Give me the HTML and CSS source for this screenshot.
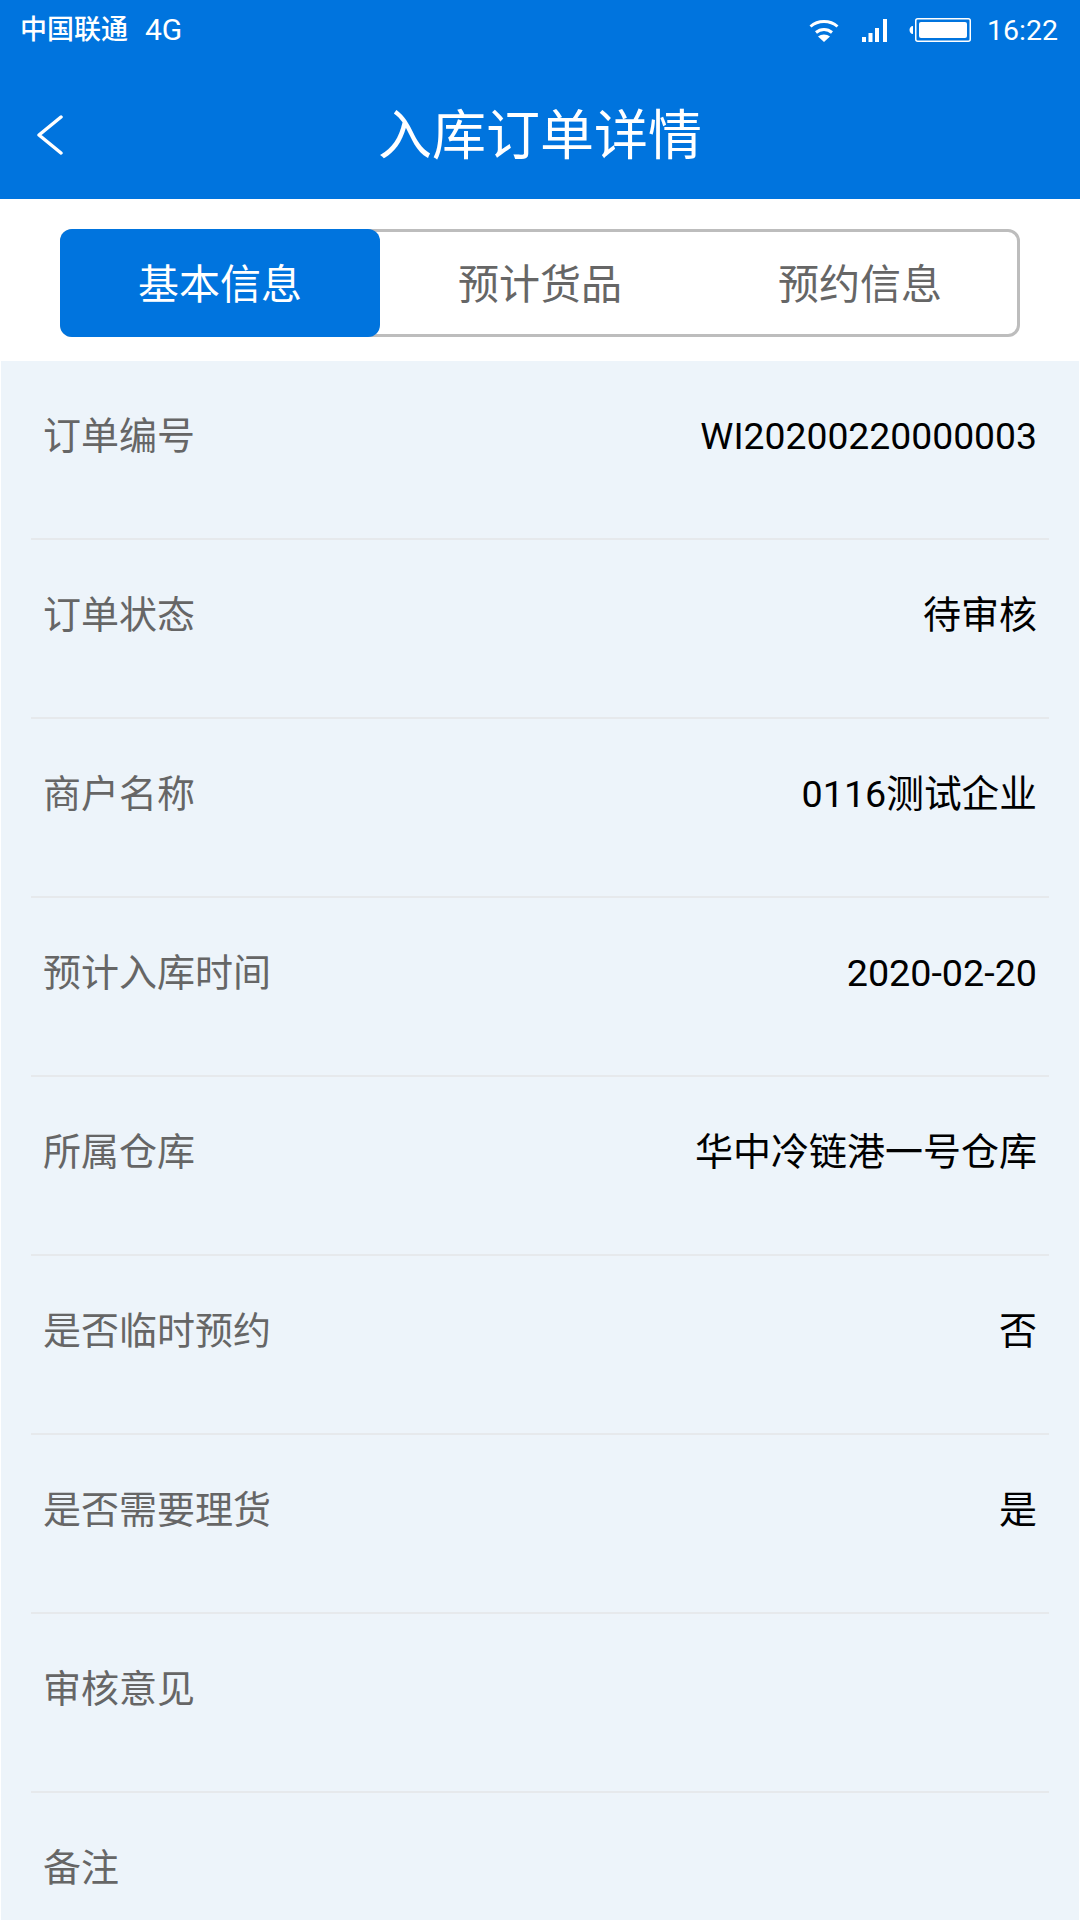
FILE: index.html
```html
<!DOCTYPE html>
<html lang="zh-CN">
<head>
  <meta charset="UTF-8" />
  <meta name="viewport" content="width=device-width, initial-scale=1.0"/>
  <title>入库订单详情</title>
  <link rel="stylesheet" href="styles.css">
</head>
<body>

<div class="top">
  <div class="status-bar">
    <div class="carrier">
      <span class="carrier-name">中国联通</span>
      <span>4G</span>
    </div>
    <div class="status-right">
      <svg class="wifi" width="30" height="23" viewBox="0 0 30 23">
        <path d="M1.5 7.5C9 .8 21 .8 28.5 7.5" fill="none" stroke="#fff" stroke-width="3"/>
        <path d="M7 13.5c4.600-4 11.400-4 16 0" fill="none" stroke="#fff" stroke-width="3"/>
        <path d="M15 23l-6-5.500c3.400-2.700 8.600-2.700 12 0z" fill="#fff"/>
      </svg>
      <svg class="signal" width="25" height="23" viewBox="0 0 25 23">
        <rect x="0" y="18" width="4" height="5" fill="#fff"/>
        <rect x="6.500" y="14" width="4" height="9" fill="#fff"/>
        <rect x="13" y="9" width="4" height="14" fill="#fff"/>
        <rect x="21" y="0" width="4" height="23" fill="#fff"/>
      </svg>
      <svg class="battery" width="62" height="24" viewBox="0 0 62 24">
        <path d="M4 8v8c-2.200 0-3.500-1.800-3.500-4S1.800 8 4 8z" fill="#fff"/>
        <rect x="6.750" y=".75" width="54.500" height="22.500" rx="2" fill="none" stroke="#fff" stroke-width="1.500"/>
        <rect x="10" y="4" width="48" height="16" rx="2" fill="#fff"/>
      </svg>
      <span class="time">16:22</span>
    </div>
  </div>
  <div class="nav-bar">
    <svg class="back" width="28" height="40" viewBox="0 0 28 40">
      <path d="M25 2L3 20l22 18" fill="none" stroke="#fff" stroke-width="3.500" stroke-linecap="round" stroke-linejoin="round"/>
    </svg>
    <h1>入库订单详情</h1>
    <span></span>
  </div>
</div>

<div class="tabs-wrap">
  <div class="tabs">
    <div class="tab active">基本信息</div>
    <div class="tab">预计货品</div>
    <div class="tab">预约信息</div>
  </div>
</div>

<div class="panel">
  <div class="row"><span class="label">订单编号</span><span class="value code">WI20200220000003</span></div>
  <div class="row"><span class="label">订单状态</span><span class="value cjk">待审核</span></div>
  <div class="row"><span class="label">商户名称</span><span class="value">0116测试企业</span></div>
  <div class="row"><span class="label">预计入库时间</span><span class="value">2020-02-20</span></div>
  <div class="row"><span class="label">所属仓库</span><span class="value cjk">华中冷链港一号仓库</span></div>
  <div class="row"><span class="label">是否临时预约</span><span class="value cjk">否</span></div>
  <div class="row"><span class="label">是否需要理货</span><span class="value cjk">是</span></div>
  <div class="row"><span class="label">审核意见</span><span class="value"></span></div>
  <div class="row"><span class="label">备注</span><span class="value"></span></div>
</div>

</body>
</html>
```

FILE: styles.css
```css
* {
  box-sizing: border-box;
}
html, body {
  height: 1920px;
  overflow: hidden;
}
body {
  margin: 0;
  background: #fff;
  font-family: Roboto, "Noto Sans CJK SC", sans-serif;
}
.top {
  background: #0074de;
  color: #fff;
  height: 199px;
}
.status-bar {
  height: 60px;
  display: flex;
  justify-content: space-between;
  align-items: center;
  padding: 0 22px 0 20px;
  font-size: 30px;
}
.carrier {
  display: flex;
  align-items: center;
  gap: 17px;
  line-height: 40px;
}
.carrier-name {
  font-size: 27px;
  font-weight: 500;
}
.status-right {
  display: flex;
  align-items: center;
}
.wifi {
  margin-right: 23px;
}
.signal {
  margin-right: 22px;
}
.battery {
  margin-right: 16px;
}
.time {
  font-size: 28.500px;
}
.nav-bar {
  height: 139px;
  display: grid;
  grid-template-columns: 1fr auto 1fr;
  align-items: center;
  padding: 14px 36px 0;
}
.nav-bar h1 {
  margin: 0;
  font-size: 54px;
  font-weight: 400;
  line-height: 70px;
}
.back {
  margin-bottom: 3px;
}
.tabs-wrap {
  height: 162px;
  padding: 30px 60px 0;
}
.tabs {
  display: flex;
  height: 108px;
  border: 3px solid #bdbdbd;
  border-radius: 12px;
  width: 960px;
}
.tab {
  flex: none;
  width: 320px;
  display: flex;
  align-items: center;
  justify-content: center;
  padding-bottom: 4px;
  font-size: 41px;
  color: #666;
}
.tab.active {
  margin: -3px 0 -3px -3px;
  background: #0074de;
  color: #fff;
  border-radius: 12px;
}
.panel {
  margin: 0 1px;
  height: 1559px;
  background: #edf4fa;
  padding: 0 30px;
}
.row {
  height: 179px;
  padding: 52px 12px 0 12px;
  display: flex;
  justify-content: space-between;
  border-bottom: 2px solid #e6e9ec;
  line-height: 46px;
}
.label {
  font-size: 38px;
  color: #666;
}
.value {
  font-size: 37.700px;
  color: #000;
}
.value.code {
  font-size: 37.300px;
}
.value.cjk {
  font-size: 38px;
}
```
